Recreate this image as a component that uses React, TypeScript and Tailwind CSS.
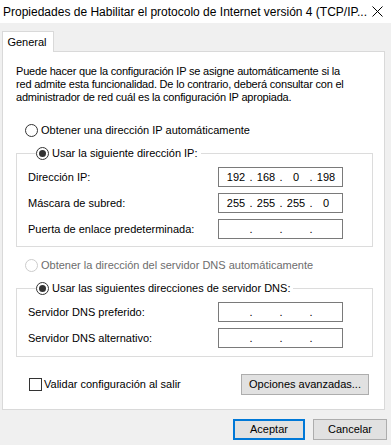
import type { ReactNode } from 'react';

function Radio({ checked = false, disabled = false }: { checked?: boolean; disabled?: boolean }) {
    return (
        <span
            className={`flex h-[13px] w-[13px] shrink-0 items-center justify-center rounded-full border bg-white ${
                disabled ? 'border-[#cccccc]' : 'border-[#333333]'
            }`}
        >
            {checked && <span className="h-[7px] w-[7px] rounded-full bg-[#333333]" />}
        </span>
    );
}

function RadioRow({ label, checked, disabled }: { label: string; checked?: boolean; disabled?: boolean }) {
    return (
        <div className={`flex h-[13px] items-center gap-[3px] ${disabled ? 'text-[#6d6d6d]' : 'text-black'}`}>
            <Radio checked={checked} disabled={disabled} />
            <span>{label}</span>
        </div>
    );
}

function IpBox({ parts = ['', '', '', ''] }: { parts?: string[] }) {
    return (
        <div className="flex h-[20px] w-[125px] items-center border border-[#7a7a7a] bg-white pl-[4px]">
            {parts.map((p, i) => (
                <div key={i} className="flex items-center">
                    <span className="w-[26px] text-center">{p}</span>
                    {i < 3 && <span className="w-[4px] text-center">.</span>}
                </div>
            ))}
        </div>
    );
}

function Field({ label, parts }: { label: string; parts?: string[] }) {
    return (
        <div className="flex items-center">
            <span className="w-[190px]">{label}</span>
            <IpBox parts={parts} />
        </div>
    );
}

function Group({ legend, children, pb = 'pb-[7px]' }: { legend: ReactNode; children: ReactNode; pb?: string }) {
    return (
        <fieldset className={`w-[357px] border border-[#dcdcdc] pt-[7px] pl-[11px] ${pb}`}>
            <legend className="ml-[8px] pr-[3px]">{legend}</legend>
            <div className="flex flex-col gap-[6px]">{children}</div>
        </fieldset>
    );
}

export default function App() {
    return (
        <div className="h-[445px] w-[391px] overflow-hidden bg-[#f0f0f0] font-['Liberation_Sans',Arial,sans-serif] text-[11px] leading-[13px] text-black">
            {/* title bar */}
            <div className="flex h-[23px] items-center justify-between bg-white pl-[3px] pr-[8px]">
                <span className="text-[12px] leading-[16px]">
                    Propiedades de Habilitar el protocolo de Internet versión 4 (TCP/IP...
                </span>
                <svg width="11" height="11" viewBox="0 0 11 11" className="text-black">
                    <path d="M0.5 0.5 L10.5 10.5 M10.5 0.5 L0.5 10.5" stroke="currentColor" strokeWidth="1" />
                </svg>
            </div>

            {/* tab */}
            <div className="relative z-10 -mb-px mt-[8px] ml-[2px] flex h-[21px] w-[52px] items-center justify-center border border-b-0 border-[#d9d9d9] bg-white pr-[2px]">
                General
            </div>

            {/* tab page */}
            <div className="ml-[2px] h-[359px] w-[383px] border border-[#d9d9d9] bg-white pt-[13px] pl-[13px] pr-[11px]">
                <p className="tracking-[-0.2px]">
                    Puede hacer que la configuración IP se asigne automáticamente si la
                    <br />
                    red admite esta funcionalidad. De lo contrario, deberá consultar con el
                    <br />
                    administrador de red cuál es la configuración IP apropiada.
                </p>

                <div className="mt-[20px] ml-[9px]">
                    <RadioRow label="Obtener una dirección IP automáticamente" />
                </div>

                <div className="mt-[10px]">
                    <Group legend={<RadioRow label="Usar la siguiente dirección IP:" checked />}>
                        <Field label="Dirección IP:" parts={['192', '168', '0', '198']} />
                        <Field label="Máscara de subred:" parts={['255', '255', '255', '0']} />
                        <Field label="Puerta de enlace predeterminada:" />
                    </Group>
                </div>

                <div className="mt-[12px] ml-[9px]">
                    <RadioRow label="Obtener la dirección del servidor DNS automáticamente" disabled />
                </div>

                <div className="mt-[10px]">
                    <Group legend={<RadioRow label="Usar las siguientes direcciones de servidor DNS:" checked />} pb="pb-[8px]">
                        <Field label="Servidor DNS preferido:" />
                        <Field label="Servidor DNS alternativo:" />
                    </Group>
                </div>

                <div className="mt-[17px] flex w-[357px] items-center justify-between pr-[4px]">
                    <div className="ml-[13px] flex items-center gap-[2px]">
                        <span className="h-[13px] w-[13px] border border-[#333333] bg-white" />
                        <span>Validar configuración al salir</span>
                    </div>
                    <button className="h-[21px] w-[128px] border border-[#adadad] bg-[#e1e1e1]">
                        Opciones avanzadas...
                    </button>
                </div>
            </div>

            {/* dialog buttons */}
            <div className="mt-[9px] flex justify-end gap-[8px] pr-[4px]">
                <button className="h-[21px] w-[72px] border-2 border-[#0078d7] bg-[#e1e1e1]">Aceptar</button>
                <button className="h-[21px] w-[74px] border border-[#adadad] bg-[#e1e1e1]">Cancelar</button>
            </div>
        </div>
    );
}
